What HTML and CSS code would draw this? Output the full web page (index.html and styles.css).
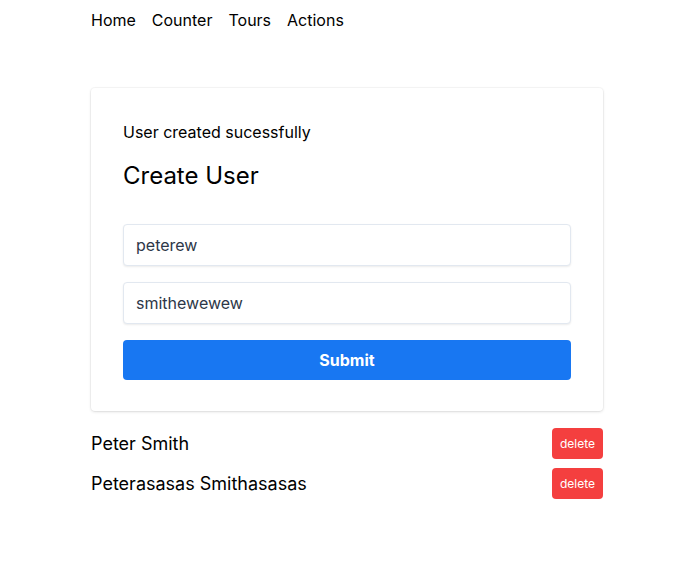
FILE: index.html
```html
<!DOCTYPE html>
<html>
<head>
<meta charset="utf-8">
<link rel="stylesheet" href="styles.css">
</head>
<body>
<div class="page">
  <nav class="nav">
    <a>Home</a><a>Counter</a><a>Tours</a><a>Actions</a>
  </nav>
  <div class="card">
    <p class="msg">User created sucessfully</p>
    <h2 class="title">Create User</h2>
    <form class="form">
      <input class="input" value="peterew">
      <input class="input" value="smithewewew">
      <button type="button" class="submit">Submit</button>
    </form>
  </div>
  <ul class="list">
    <li class="row"><span>Peter Smith</span><button class="del">delete</button></li>
    <li class="row"><span>Peterasasas Smithasasas</span><button class="del">delete</button></li>
  </ul>
</div>
</body>
</html>
```
FILE: styles.css
```css
* { box-sizing: border-box; }
body { margin: 0; background: #fff; font-family: Inter, "Noto Sans", sans-serif; color: #000; }
.page { width: 512px; margin-left: 91px; }
.nav { display: flex; gap: 16px; height: 40px; align-items: center; font-size: 16px; }
.nav a { color: #000; }
.card { margin-top: 48px; background: #fff; border-radius: 4px; padding: 32px 32px 31px; box-shadow: 0 0 0 1px rgba(0,0,0,0.03), 0 1px 3px rgba(0,0,0,0.12); }
.msg { margin: 0; font-size: 16px; line-height: 24px; }
.title { margin: 16px 0 0; font-size: 24px; line-height: 32px; font-weight: 400; }
.form { margin-top: 32px; display: flex; flex-direction: column; gap: 16px; }
.input { height: 42px; border: 1px solid #e2e8f0; border-radius: 4px; padding: 0 12px; font: 16px Inter, sans-serif; color: #2d3748; box-shadow: 0 1px 2px rgba(0,0,0,0.08); outline: none; }
.submit { height: 40px; border: 0; border-radius: 4px; background: #1877f2; color: #fff; font: 700 16px Inter, sans-serif; }
.list { list-style: none; margin: 17px 0 0; padding: 0; display: flex; flex-direction: column; gap: 9px; }
.row { display: flex; justify-content: space-between; align-items: center; height: 31px; font-size: 18px; }
.del { height: 31px; padding: 0 8px; border: 0; border-radius: 4px; background: #f43f3f; color: #fff; font: 12px Inter, sans-serif; }
```
